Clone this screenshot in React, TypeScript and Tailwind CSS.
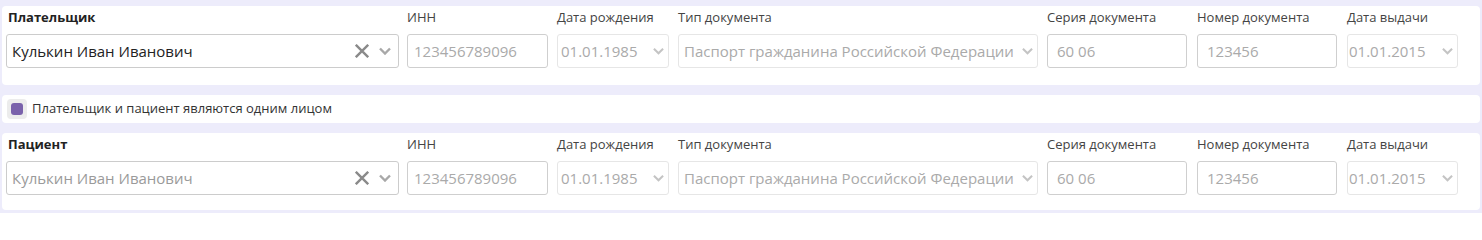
import React from "react";

const FONT = "font-['Segoe_UI','Open_Sans','Noto_Sans',sans-serif]";

function Chevron({ className, w = 2 }: { className?: string; w?: number }) {
  return (
    <svg viewBox="0 0 12 8" className={className} fill="none" stroke="currentColor" strokeWidth={w}>
      <path d="M1 1.5l5 5 5-5" />
    </svg>
  );
}

function Cross({ className }: { className?: string }) {
  return (
    <svg viewBox="0 0 14 14" className={className} fill="none" stroke="currentColor" strokeWidth={2.4}>
      <path d="M0.8 0.8l12.4 12.4M13.2 0.8L0.8 13.2" />
    </svg>
  );
}

function Label({ children, bold }: { children: React.ReactNode; bold?: boolean }) {
  return (
    <div className={`h-[18px] text-[13px] leading-[18px] whitespace-nowrap ${bold ? "font-bold text-[#222]" : "text-[#444]"}`}>
      {children}
    </div>
  );
}

function TextBox({ value, pl = "pl-[6px]" }: { value: string; pl?: string }) {
  return (
    <div className={`mt-[8px] flex h-[34px] items-center rounded-[3px] border border-[#cfcfcf] bg-white ${pl} text-[15px] text-[#aaa]`}>
      {value}
    </div>
  );
}

function SelectBox({ value, pl = "pl-[5px]" }: { value: string; pl?: string }) {
  return (
    <div className={`mt-[8px] flex h-[34px] items-center justify-between overflow-hidden rounded-[3px] border border-[#e6e6e6] bg-white ${pl} pr-[4px] text-[15px] text-[#aaa]`}>
      <span className="whitespace-nowrap">{value}</span>
      <Chevron className="ml-[2px] h-[8px] w-[11px] shrink-0 text-[#c4c4c4]" w={2.2} />
    </div>
  );
}

function PersonPanel({ title, name, active, pb }: { title: string; name: string; active?: boolean; pb: string }) {
  return (
    <div className={`rounded-[4px] bg-white px-[4px] pt-[2px] ${pb}`}>
      <div className="grid grid-cols-[392px_140px_111px_359px_139px_140px_111px] gap-x-[10px]">
        <div>
          <div className="pl-[2px]"><Label bold>{title}</Label></div>
          <div className="mt-[8px] flex h-[34px] w-[393px] items-center justify-between rounded-[3px] border border-[#cccccc] bg-white pl-[5px] pr-[7px]">
            <span className={`text-[15px] ${active ? "text-[#222]" : "text-[#9a9a9a]"}`}>{name}</span>
            <div className="flex items-center gap-[10px]">
              <Cross className="h-[14px] w-[14px] text-[#8a8a8a]" />
              <Chevron className="h-[8px] w-[12px] text-[#a8a8a8]" w={2.4} />
            </div>
          </div>
        </div>
        <div className="-ml-[1px]">
          <Label>ИНН</Label>
          <TextBox value="123456789096" />
        </div>
        <div className="-ml-[1px]">
          <Label>Дата рождения</Label>
          <SelectBox value="01.01.1985" pl="pl-[3px]" />
        </div>
        <div className="-ml-[1px]">
          <Label>Тип документа</Label>
          <SelectBox value="Паспорт гражданина Российской Федерации" />
        </div>
        <div className="-ml-[1px]">
          <Label>Серия документа</Label>
          <TextBox value="60 06" pl="pl-[9px]" />
        </div>
        <div>
          <Label>Номер документа</Label>
          <TextBox value="123456" pl="pl-[9px]" />
        </div>
        <div>
          <Label>Дата выдачи</Label>
          <SelectBox value="01.01.2015" pl="pl-[1px]" />
        </div>
      </div>
    </div>
  );
}

export default function App() {
  return (
    <div className={`${FONT} h-[213px] w-full overflow-hidden bg-[#edecfb] px-[2px] pt-[6px]`}>
      <PersonPanel title="Плательщик" name="Кулькин Иван Иванович" active pb="pb-[17px]" />

      <div className="mt-[10px] flex h-[28px] items-center rounded-[4px] bg-white pl-[5px]">
        <div className="flex h-[20px] w-[20px] items-center justify-center rounded-[4px] bg-[#ececec]">
          <div className="h-[12px] w-[12px] rounded-[3px] bg-[#7a62ab]" />
        </div>
        <span className="ml-[5px] text-[13px] text-[#333]">Плательщик и пациент являются одним лицом</span>
      </div>

      <div className="mt-[10px]">
        <PersonPanel title="Пациент" name="Кулькин Иван Иванович" pb="pb-[15px]" />
      </div>
    </div>
  );
}
